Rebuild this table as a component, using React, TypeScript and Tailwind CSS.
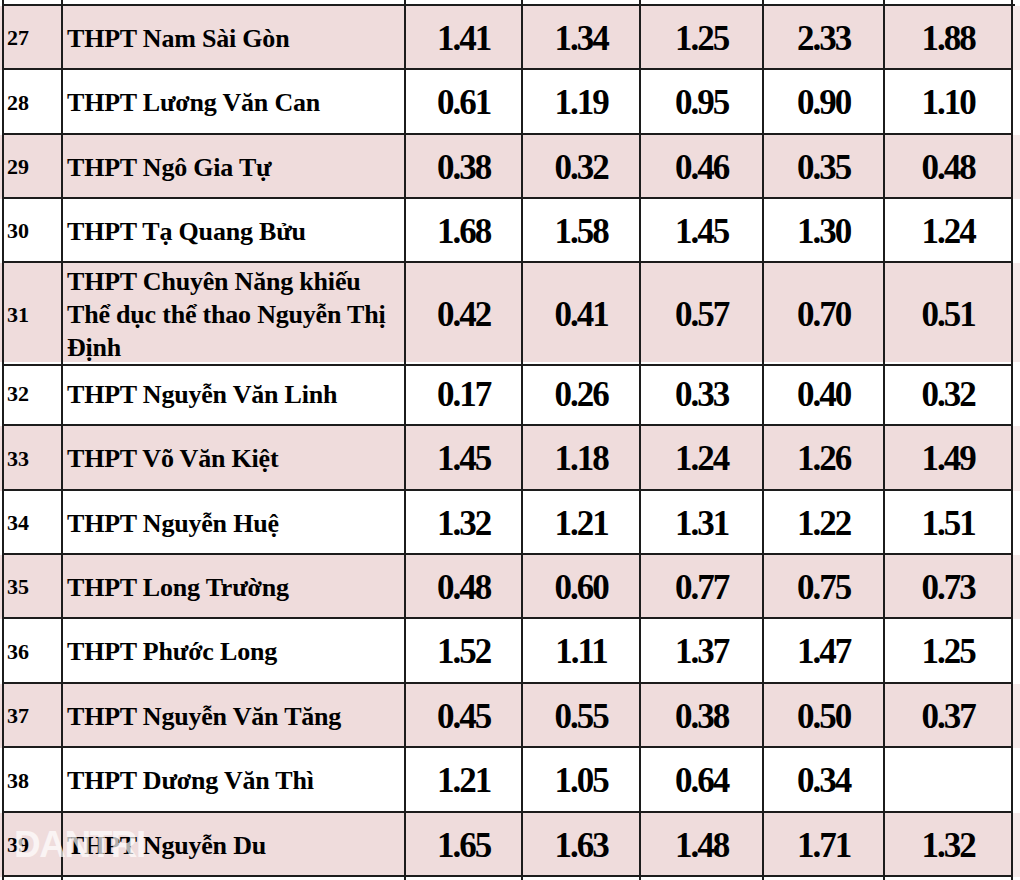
const rows = [
  { no: "27", name: ["THPT Nam Sài Gòn"], vals: ["1.41", "1.34", "1.25", "2.33", "1.88"], h: "h-[64px]" },
  { no: "28", name: ["THPT Lương Văn Can"], vals: ["0.61", "1.19", "0.95", "0.90", "1.10"], h: "h-[65px]" },
  { no: "29", name: ["THPT Ngô Gia Tự"], vals: ["0.38", "0.32", "0.46", "0.35", "0.48"], h: "h-[64px]" },
  { no: "30", name: ["THPT Tạ Quang Bửu"], vals: ["1.68", "1.58", "1.45", "1.30", "1.24"], h: "h-[64px]" },
  {
    no: "31",
    name: ["THPT Chuyên Năng khiếu", "Thể dục thể thao Nguyễn Thị", "Định"],
    vals: ["0.42", "0.41", "0.57", "0.70", "0.51"],
    h: "h-[99px]",
  },
  { no: "32", name: ["THPT Nguyễn Văn Linh"], vals: ["0.17", "0.26", "0.33", "0.40", "0.32"], h: "h-[64px]" },
  { no: "33", name: ["THPT Võ Văn Kiệt"], vals: ["1.45", "1.18", "1.24", "1.26", "1.49"], h: "h-[65px]" },
  { no: "34", name: ["THPT Nguyễn Huệ"], vals: ["1.32", "1.21", "1.31", "1.22", "1.51"], h: "h-[64px]" },
  { no: "35", name: ["THPT Long Trường"], vals: ["0.48", "0.60", "0.77", "0.75", "0.73"], h: "h-[64px]" },
  { no: "36", name: ["THPT Phước Long"], vals: ["1.52", "1.11", "1.37", "1.47", "1.25"], h: "h-[65px]" },
  { no: "37", name: ["THPT Nguyễn Văn Tăng"], vals: ["0.45", "0.55", "0.38", "0.50", "0.37"], h: "h-[64px]" },
  { no: "38", name: ["THPT Dương Văn Thì"], vals: ["1.21", "1.05", "0.64", "0.34", ""], h: "h-[65px]" },
  { no: "39", name: ["THPT Nguyễn Du"], vals: ["1.65", "1.63", "1.48", "1.71", "1.32"], h: "h-[64px]" },
];

const grid = "grid grid-cols-[4px_59px_343px_117px_118px_123px_121px_128px_1fr]";
const line = "border-r-2 border-[#1c1c1c]";

function EmptyRow() {
  return (
    <div className={`${grid} h-[4px] bg-white`}>
      <div className="border-r-2 border-[#1c1c1c]" />
      {[0, 1, 2, 3, 4, 5, 6].map((i) => (
        <div key={i} className={line} />
      ))}
      <div />
    </div>
  );
}

export default function App() {
  return (
    <div
      className="relative w-[1020px] h-[880px] overflow-hidden bg-white text-black"
      style={{ fontFamily: '"Liberation Serif", "Times New Roman", serif' }}
    >
      <EmptyRow />
      <div className="border-t-2 border-[#1c1c1c] mx-[2px] w-[1013px]" />
      {rows.map((r, i) => {
        const bg = i % 2 === 0 ? "bg-[#efdcdc]" : "bg-white";
        return (
          <div key={r.no} className={`${grid} ${r.h} ${bg}`}>
            <div className="border-r-2 border-[#1c1c1c]" />
            <div className={`${line} border-b-2 flex items-center pl-[3px] pt-[1px] text-[22px] font-bold`}>
              {r.no}
            </div>
            <div className={`${line} border-b-2 flex flex-col justify-center pl-[4px] pt-[2px] text-[26px] leading-[33px] font-bold tracking-[-0.2px]`}>
              {r.name.map((n) => (
                <span key={n} className="whitespace-nowrap">{n}</span>
              ))}
            </div>
            {r.vals.map((v, j) => (
              <div
                key={j}
                className={`${line} border-b-2 flex items-center justify-center pt-[4px] text-[35px] font-bold tracking-[-2px]`}
              >
                {v}
              </div>
            ))}
            <div className="bg-white/40" />
          </div>
        );
      })}
      <EmptyRow />

      {/* watermark */}
      <div
        className="absolute left-[14px] top-[826px] text-[37px] leading-none font-black tracking-[-1.5px] text-white/70 select-none pointer-events-none"
        style={{ fontFamily: '"Liberation Sans", Arial, sans-serif' }}
      >
        DANTRI
      </div>
    </div>
  );
}
